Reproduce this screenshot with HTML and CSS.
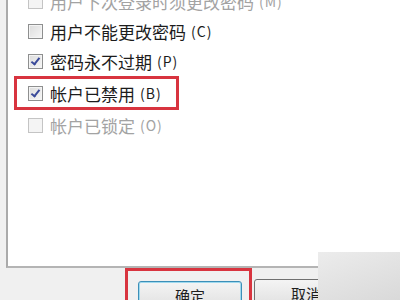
FILE: index.html
```html
<!DOCTYPE html>
<html lang="zh-CN">
<head>
  <meta charset="UTF-8" />
  <title>帐户属性</title>
  <link rel="stylesheet" href="styles.css">
</head>
<body>
  <div class="panel">
    <ul class="options">
      <li class="row disabled"><span class="box"></span>用户下次登录时须更改密码 <span class="key">(M)</span></li>
      <li class="row"><span class="box"></span>用户不能更改密码 <span class="key">(C)</span></li>
      <li class="row"><span class="box checked"></span>密码永不过期 <span class="key">(P)</span></li>
      <li class="row highlight"><span class="box checked"></span>帐户已禁用 <span class="key">(B)</span></li>
      <li class="row disabled"><span class="box"></span>帐户已锁定 <span class="key">(O)</span></li>
    </ul>
  </div>

  <div class="actions">
    <div class="mark">
      <button type="button" class="btn default">确定</button>
    </div>
    <button type="button" class="btn">取消</button>
  </div>

  <div class="watermark"></div>
</body>
</html>
```

FILE: styles.css
```css
html, body {
  margin: 0;
  width: 400px;
  height: 300px;
  overflow: hidden;
}
body {
  position: relative;
  background: #f0f0f0;
  font-family: "Noto Sans CJK SC", "Microsoft YaHei", sans-serif;
  color: #1c1c1c;
}
.panel {
  margin-left: 6px;
  height: 266px;
  background: #fff;
  border-left: 2px solid #aaaaaa;
  border-bottom: 2px solid #b4b4b4;
  overflow: hidden;
}
.options {
  list-style: none;
  margin: -14px 0 0 0;
  padding: 0;
}
.row {
  display: flex;
  align-items: center;
  height: 30px;
  padding-left: 20px;
  font-size: 17px;
  white-space: nowrap;
}
.row .key {
  margin-left: 5px;
  font-size: 14px;
  letter-spacing: 1px;
}
.row.disabled {
  color: #a3a3a3;
}
.row.highlight {
  width: 148px;
  height: 28px;
  margin-left: 6px;
  padding-left: 11px;
  border: 3px solid #d8343f;
}
.box {
  flex: none;
  width: 13px;
  height: 13px;
  margin-right: 7px;
  border: 1px solid #8e8f8f;
  background: linear-gradient(135deg, #dcdcdc, #f6f6f6);
  box-shadow: inset 0 0 0 1px #f4f4f4;
  position: relative;
}
.disabled .box {
  border-color: #c4c4c4;
  background: #f4f4f4;
}
.box.checked::after {
  content: "";
  position: absolute;
  left: 4px;
  top: 1px;
  width: 3px;
  height: 7px;
  border: solid #3a4a9a;
  border-width: 0 2px 2px 0;
  transform: rotate(38deg);
}
.actions {
  display: flex;
  align-items: flex-start;
  padding-left: 125px;
}
.mark {
  border: 3px solid #d8343f;
  border-bottom: none;
  padding: 10px 7px 0 10px;
}
.btn {
  width: 104px;
  height: 26px;
  border: 1px solid #707070;
  border-radius: 3px;
  background: linear-gradient(#f4f4f4, #e2e2e2);
  font-family: "Noto Sans CJK SC", sans-serif;
  font-size: 15px;
  color: #1e1e1e;
  padding: 4px 0 0;
  line-height: 18px;
}
.btn.default {
  border-color: #3c8fb8;
  box-shadow: inset 0 0 0 1px #9fd9ee;
}
.actions > .btn {
  margin: 11px 0 0 2px;
}
.watermark {
  position: absolute;
  left: 318px;
  top: 252px;
  width: 82px;
  height: 48px;
  background: linear-gradient(160deg, #ececec, #d9d9d9);
}
```
